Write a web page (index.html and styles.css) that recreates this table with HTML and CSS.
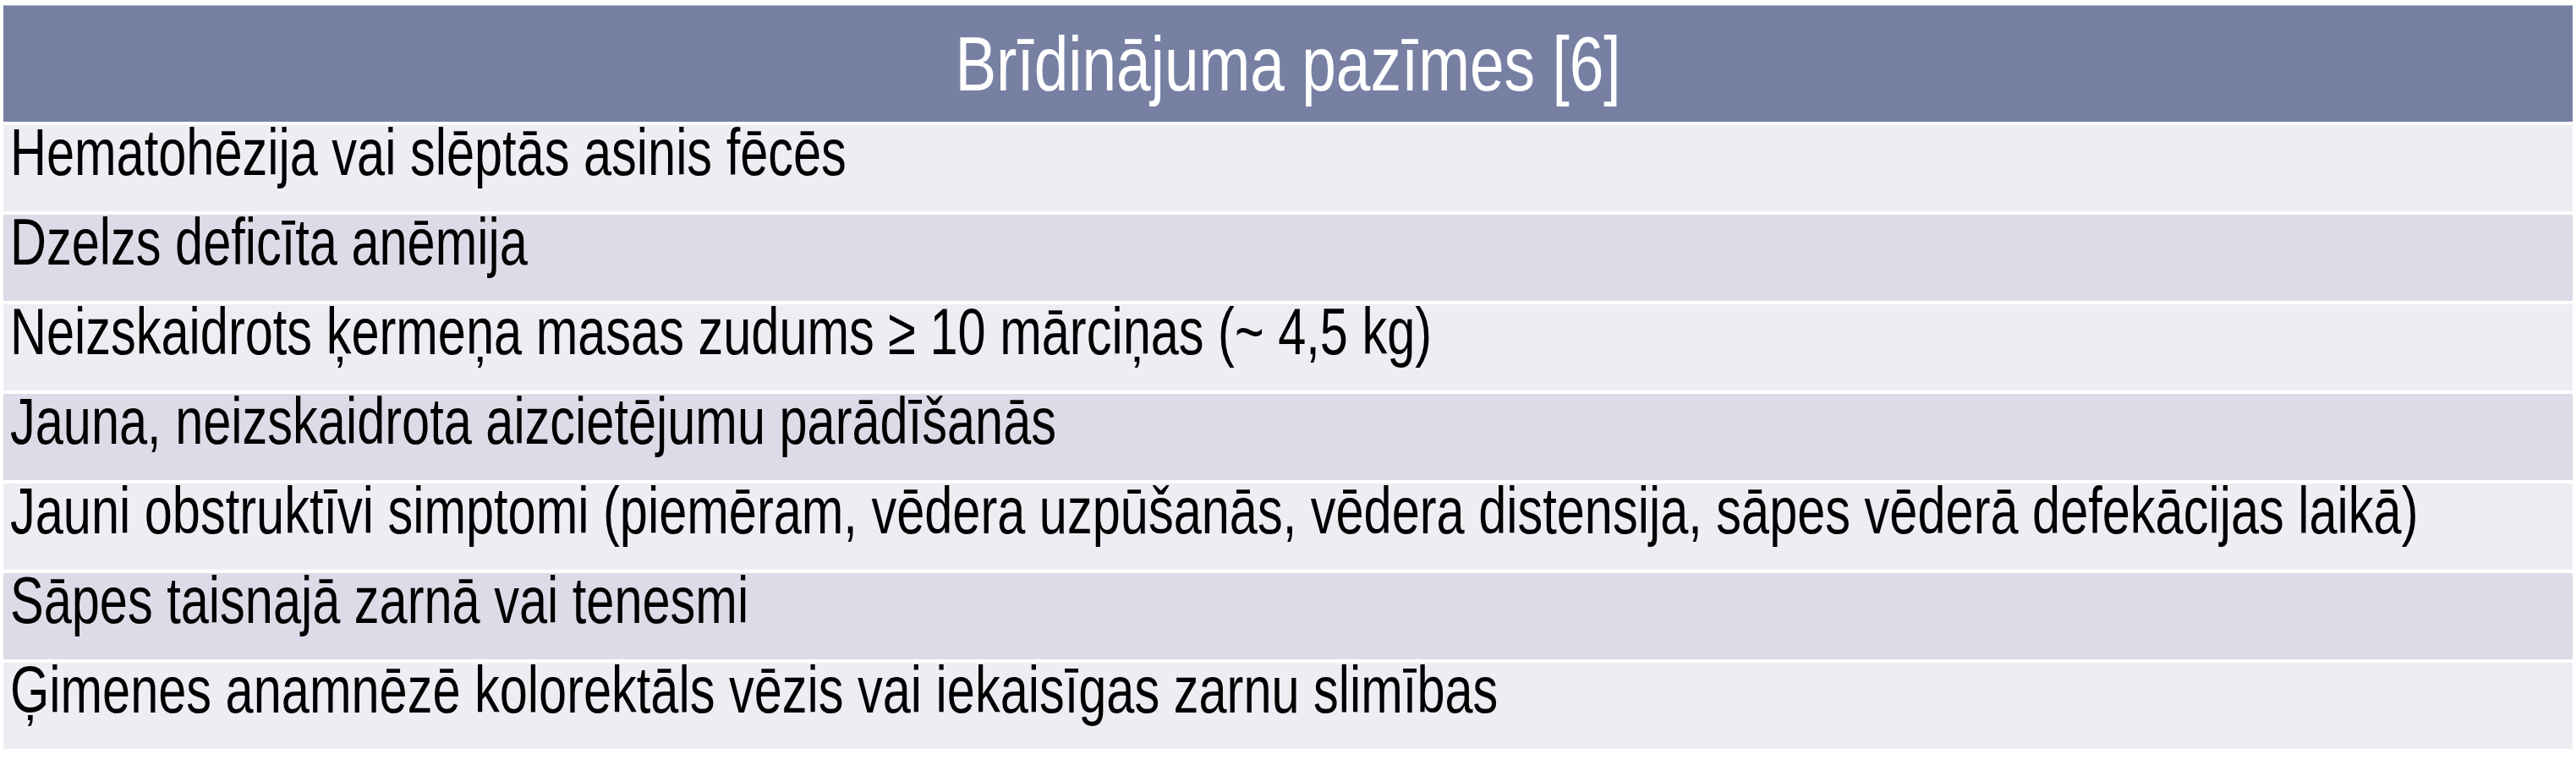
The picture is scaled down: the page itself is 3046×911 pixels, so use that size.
FILE: index.html
```html
<!DOCTYPE html>
<html lang="lv">
<head>
<meta charset="utf-8">
<title>Brīdinājuma pazīmes</title>
<link rel="stylesheet" href="styles.css">
</head>
<body>
<div class="table">
  <div class="head"><span class="head-text">Brīdinājuma pazīmes [6]</span></div>
  <div class="row odd"><span class="cell-text">Hematohēzija vai slēptās asinis fēcēs</span></div>
  <div class="row even"><span class="cell-text">Dzelzs deficīta anēmija</span></div>
  <div class="row odd"><span class="cell-text">Neizskaidrots ķermeņa masas zudums ≥ 10 mārciņas (~ 4,5 kg)</span></div>
  <div class="row even"><span class="cell-text">Jauna, neizskaidrota aizcietējumu parādīšanās</span></div>
  <div class="row odd"><span class="cell-text">Jauni obstruktīvi simptomi (piemēram, vēdera uzpūšanās, vēdera distensija, sāpes vēderā defekācijas laikā)</span></div>
  <div class="row even"><span class="cell-text">Sāpes taisnajā zarnā vai tenesmi</span></div>
  <div class="row odd"><span class="cell-text">Ģimenes anamnēzē kolorektāls vēzis vai iekaisīgas zarnu slimības</span></div>
</div>
</body>
</html>
```

FILE: styles.css
```css
html, body {
  margin: 0;
  padding: 0;
  background: #ffffff;
}

body {
  font-family: "Liberation Sans", Arial, sans-serif;
}

.table {
  margin: 6px 4px 0 4px;
  width: 3038px;
  display: flex;
  flex-direction: column;
  gap: 4px;
}

.head {
  height: 138px;
  background: #7780a3;
  color: #ffffff;
  font-size: 73px;
  line-height: 1.15;
  display: flex;
  align-items: center;
  justify-content: center;
  border-top: 1px solid #aeb3c9;
  box-sizing: border-box;
}

.head-text {
  display: block;
  white-space: nowrap;
  transform: scaleY(1.25);
  transform-origin: center;
}

.row {
  height: 102px;
  box-sizing: border-box;
  padding-left: 8px;
  display: flex;
  align-items: flex-start;
  font-size: 59.5px;
  color: #000000;
  white-space: nowrap;
}

.cell-text {
  display: block;
  line-height: 50px;
  transform: scaleY(1.311);
  transform-origin: left top;
}

.odd {
  background: #edeef4;
}

.even {
  background: #dcdce8;
}
```
